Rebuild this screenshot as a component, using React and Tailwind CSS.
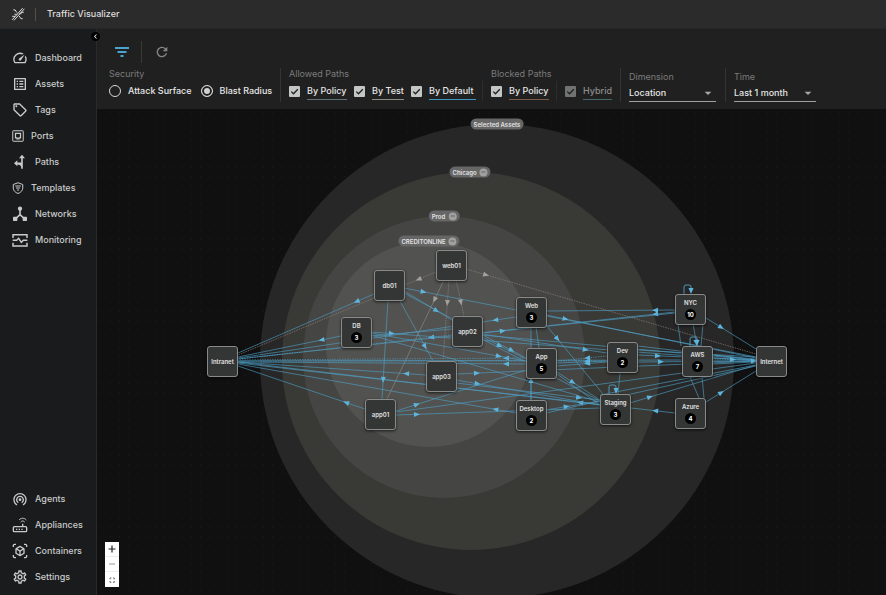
import React from 'react';
import {
  MdOutlineSpeed, MdOutlineListAlt, MdOutlineSell, MdWifiTethering, MdOutlineViewInAr,
  MdOutlineSettings, MdRefresh, MdArrowDropDown, MdChevronLeft,
} from 'react-icons/md';

const stroke = { viewBox: '0 0 24 24', fill: 'none', stroke: 'currentColor', strokeWidth: 2 };

const PortsIcon = () => (
  <svg {...stroke} className="size-3"><rect x="1.5" y="1.5" width="21" height="21" rx="1" /><path d="M7 6.500h10v9h-3v2h-4v-2h-3z" strokeWidth="2.500" /></svg>
);
const PathsIcon = () => (
  <svg {...stroke} className="size-4"><path d="M15 22V5M15 14H6M7 14.500c5 0 8 2 8 6" strokeWidth="2.400" /><path d="M15 1l4.500 5.500h-9zM3 14l5-4.500v9z" fill="currentColor" stroke="none" /></svg>
);
const TemplatesIcon = () => (
  <svg {...stroke} className="size-3"><path d="M12 1.500l9.500 3.500v7c0 5-4 9-9.500 11-5.500-2-9.500-6-9.500-11V5z" /><path d="M6.500 8h11M8 12h8M10 16h4" strokeWidth="2.200" /></svg>
);
const NetworksIcon = () => (
  <svg {...stroke} className="size-4"><path d="M12 4v9M12 13l-7 6.500M12 13l7 6.500" strokeWidth="2.400" /><g fill="currentColor" stroke="none"><circle cx="12" cy="4" r="3.200" /><rect x="1.500" y="16" width="6.500" height="6.500" rx="1" /><rect x="16" y="16" width="6.500" height="6.500" rx="1" /></g></svg>
);
const MonitoringIcon = () => (
  <svg {...stroke} className="size-4"><path d="M1.500 9V4h21v5M1.500 16v5h21v-5M1 12.500h6l3-3 4 6 3-3h6" strokeWidth="2.200" /></svg>
);
const AppliancesIcon = () => (
  <svg {...stroke} className="size-4"><rect x="2" y="14.500" width="20" height="7.500" rx="1.500" /><path d="M16 15v-5M6 18.500h2M10 18.500h2M14 18.500h2" /><path d="M10.500 4.500c3-3.500 8-3.500 11 0M13 7.500c2-2 4-2 6 0" strokeWidth="1.500" /></svg>
);
const BrandIcon = () => (
  <svg viewBox="0 0 24 24" fill="none" stroke="currentColor" strokeWidth="1.700" className="size-3.5"><path d="M2 22L20 2M5 23L23 3M4 5l3 0 3 4.500M20 20h-3l-3-4.500M2 16h5M17 9h5M6 12.500h4M14 11.500h4" /></svg>
);
const FilterIcon = () => (
  <svg viewBox="0 0 14 10" className="h-2.5 w-3.5" fill="none" stroke="currentColor" strokeWidth="1.800"><path d="M0 1h14M2.500 5h9M5.500 9h3" /></svg>
);

const mainLinks = [
  ['Dashboard', <MdOutlineSpeed className="size-4" />],
  ['Assets', <MdOutlineListAlt className="size-4" />],
  ['Tags', <MdOutlineSell className="size-4" />],
  ['Ports', <PortsIcon />],
  ['Paths', <PathsIcon />],
  ['Templates', <TemplatesIcon />],
  ['Networks', <NetworksIcon />],
  ['Monitoring', <MonitoringIcon />],
];
const systemLinks = [
  ['Agents', <MdWifiTethering className="size-4" />],
  ['Appliances', <AppliancesIcon />],
  ['Containers', <MdOutlineViewInAr className="size-4" />],
  ['Settings', <MdOutlineSettings className="size-4" />],
];

function NavList({ links }) {
  return (
    <ul>
      {links.map(([label, icon]) => (
        <li key={label}>
          <a href="#" className="flex h-[26px] items-center gap-[7px] pl-3 text-[9px] font-medium text-[#c9cbcb]">
            {icon}
            {label}
          </a>
        </li>
      ))}
    </ul>
  );
}

function Check({ label, width, line, dim }) {
  return (
    <label className={`flex items-center gap-[7px] ${dim ? 'text-[#8b8d8e]' : 'text-[#e6e6e6]'}`}>
      <span className="grid">
        <input type="checkbox" defaultChecked disabled={dim} className={`col-start-1 row-start-1 size-[11px] appearance-none rounded-[1px] ${dim ? 'bg-[#717373]' : 'bg-[#c4c6c6]'}`} />
        <svg viewBox="0 0 11 11" className="pointer-events-none col-start-1 row-start-1 size-[11px]" fill="none" stroke="#202020" strokeWidth="1.300"><path d="M2.300 5.600l2.200 2.200 4.300-4.600" /></svg>
      </span>
      <span className={`h-[18px] border-b pt-[3px] leading-[12px] whitespace-nowrap ${width} ${line}`}>{label}</span>
    </label>
  );
}

function Radio({ label, checked }) {
  return (
    <label className="flex items-center gap-[7px] text-[#e6e6e6]">
      <input type="radio" name="security" defaultChecked={checked} className="size-3 appearance-none rounded-full border border-[#d8d8d8] checked:bg-[#d0d0d0] checked:shadow-[inset_0_0_0_2px_#202020]" />
      <span className="whitespace-nowrap">{label}</span>
    </label>
  );
}

function Dropdown({ id, label, value, width }) {
  return (
    <div className={`flex flex-col ${width}`}>
      <label htmlFor={id} className="leading-3 font-normal text-[#7b7b7b]">{label}</label>
      <div className="mt-0.5 grid h-[18px] items-center border-b border-[#a0a0a0]">
        <select id={id} className="col-start-1 row-start-1 w-full appearance-none bg-transparent font-medium text-[#e6e6e6]">
          <option>{value}</option>
        </select>
        <MdArrowDropDown className="pointer-events-none col-start-1 row-start-1 size-4 justify-self-end text-[#a8a8a8]" />
      </div>
    </div>
  );
}

const ORIGIN_X = 97;
const ORIGIN_Y = 109;
const NODE_HALF = 15;

const rings = [
  [497, 361, 237, '#272727'],
  [471, 361, 189, '#393935'],
  [444, 357, 141, '#454543'],
  [429, 344, 103, '#525250'],
];

const ringLabels = [
  ['Selected Assets', 497, 124, false],
  ['Chicago', 470, 172, true],
  ['Prod', 444, 216, true],
  ['CREDITONLINE', 429, 241, true],
];

const nodes = [
  ['Intranet', 222, 361], ['db01', 389, 285], ['DB', 356, 332, 3], ['app01', 380, 414],
  ['web01', 451, 265], ['app02', 467, 331], ['app03', 441, 376], ['Web', 531, 312, 3],
  ['App', 541, 363, 5], ['Desktop', 531, 415, 2], ['Dev', 622, 357, 2], ['Staging', 615, 409, 3],
  ['NYC', 690, 309, 10], ['AWS', 697, 361, 7], ['Azure', 690, 413, 4], ['Internet', 771, 361],
];

const B = '#4f9fc4';
const G = '#8b8b8b';
const T = '#94827a';

// from x, from y, to x, to y, colour, arrow distance from the start, dashed
const edges = [
  [374, 294, 238, 353, B, 19],
  [436, 272, 238, 355, T, 19, 1],
  [341, 336, 238, 357, B, 20],
  [516, 317, 238, 358, B, 21],
  [452, 335, 238, 359, B, 21, 1],
  [675, 312, 238, 359, B, 20],
  [675, 310, 546, 311, B, 20],
  [526, 358, 238, 360, B, 20, 1],
  [607, 361, 238, 361, B, 20, 1],
  [526, 364, 238, 362, B, 20],
  [426, 375, 238, 362, B, 20],
  [516, 413, 238, 364, B, 21],
  [365, 409, 238, 366, B, 20],
  [600, 405, 238, 362, B, 20],
  [675, 413, 238, 363, B, 20],
  [682, 360, 238, 361, B, 0],
  [371, 332, 756, 361, B, 21],
  [371, 333, 526, 361, B, 130],
  [371, 335, 600, 402, B, 0],
  [371, 336, 452, 329, B, 0],
  [404, 288, 756, 357, B, 20],
  [404, 291, 452, 320, B, 38],
  [404, 293, 526, 358, B, 122],
  [388, 300, 382, 399, B, 80],
  [400, 301, 433, 361, B, 52],
  [444, 280, 387, 399, G, 22],
  [449, 280, 443, 361, G, 23, 1],
  [456, 280, 464, 316, G, 23, 1],
  [466, 269, 756, 354, T, 21, 1],
  [546, 315, 756, 358, B, 20],
  [546, 325, 603, 394, B, 18],
  [536, 327, 539, 348, B, 0],
  [531, 327, 531, 400, B, 0],
  [531, 400, 531, 377, B, 20],
  [482, 333, 675, 313, B, 21],
  [482, 335, 756, 360, B, 0],
  [482, 337, 526, 359, B, 20],
  [482, 339, 600, 401, B, 0],
  [482, 334, 607, 353, B, 105],
  [607, 356, 557, 361, B, 20, 1],
  [607, 361, 557, 363, B, 20],
  [607, 362, 557, 366, B, 20],
  [557, 372, 600, 400, B, 19],
  [557, 374, 600, 405, B, 0],
  [456, 374, 756, 361, B, 21],
  [456, 380, 600, 405, B, 22],
  [456, 383, 600, 400, B, 124],
  [396, 411, 526, 370, B, 22],
  [396, 412, 756, 363, B, 0],
  [396, 415, 600, 408, B, 21],
  [546, 410, 600, 401, B, 21],
  [546, 413, 756, 366, B, 0],
  [600, 395, 756, 365, B, 0],
  [630, 403, 756, 365, B, 21],
  [638, 350, 756, 357, B, 0],
  [638, 355, 756, 360, B, 20],
  [638, 362, 756, 361, B, 23],
  [638, 346, 756, 360, B, 0],
  [712, 359, 756, 360, B, 21, 1],
  [712, 361, 756, 361, B, 42],
  [712, 364, 756, 362, B, 0],
  [712, 355, 756, 359, B, 0],
  [706, 318, 756, 349, B, 18],
  [706, 402, 756, 371, B, 18],
  [678, 324, 681, 346, B, 0],
  [693, 324, 697, 346, B, 19],
  [703, 324, 701, 346, B, 0],
  [690, 377, 699, 398, B, 0],
  [702, 377, 704, 398, B, 0],
  [620, 373, 618, 394, B, 0],
];

const loops = [[684, 294], [690, 346], [609, 394]];

function Arrow({ x, y, angle, color }) {
  return <path d="M-3 -2.500L3 0L-3 2.500Z" fill={color} transform={`translate(${x} ${y}) rotate(${angle})`} />;
}

function Edge({ edge: [x1, y1, x2, y2, color, at, dashed] }) {
  const length = Math.hypot(x2 - x1, y2 - y1);
  const angle = (Math.atan2(y2 - y1, x2 - x1) * 180) / Math.PI;
  return (
    <g>
      <line x1={x1} y1={y1} x2={x2} y2={y2} stroke={color} strokeWidth="0.800" strokeOpacity="0.800" strokeDasharray={dashed ? '1.500 1' : undefined} />
      {at > 0 && <Arrow x={x1 + ((x2 - x1) * at) / length} y={y1 + ((y2 - y1) * at) / length} angle={angle} color={color === B ? '#5fb4db' : '#a3a19f'} />}
    </g>
  );
}

function Graph() {
  return (
    <div className="relative min-h-0 flex-1 overflow-hidden bg-[#101010] bg-[radial-gradient(#1c1c1c_0.700px,transparent_1px)] bg-[size:9px_9px]">
      <svg width="789" height="486" viewBox={`${ORIGIN_X} ${ORIGIN_Y} 789 486`} className="absolute top-0 left-0 overflow-visible" aria-hidden="true">
        {rings.map(([cx, cy, r, fill]) => <circle key={r} cx={cx} cy={cy} r={r} fill={fill} />)}
        {edges.map((edge, i) => <Edge key={i} edge={edge} />)}
        {loops.map(([x, y]) => (
          <g key={x}>
            <path d={`M${x} ${y}v-7q0 -2 2 -2h3q2 0 2 2v5`} fill="none" stroke={B} strokeWidth="0.900" />
            <Arrow x={x + 7} y={y - 3} angle={90} color="#5fb4db" />
          </g>
        ))}
      </svg>
      {ringLabels.map(([name, x, y, closable]) => (
        <div key={name} style={{ left: x - ORIGIN_X, top: y - ORIGIN_Y }} className="absolute flex h-[11px] -translate-x-1/2 -translate-y-1/2 items-center gap-[3px] rounded-full bg-[#666666] px-[3px] text-[6px] font-semibold whitespace-nowrap text-[#e2e2e2]">
          {name}
          {closable && (
            <button type="button" aria-label={`Collapse ${name}`} className="flex size-2 items-center justify-center rounded-full bg-[#a0a0a0]">
              <span className="h-px w-1 bg-[#666666]" />
            </button>
          )}
        </div>
      ))}
      {nodes.map(([name, x, y, count]) => (
        <div key={name} style={{ left: x - ORIGIN_X - NODE_HALF, top: y - ORIGIN_Y - NODE_HALF }} className="absolute flex size-[31px] flex-col items-center justify-center gap-0.5 rounded-[3px] border border-[#8a8a8a] bg-[#343636] text-[6px] leading-[8px] font-semibold text-[#e0e0e0] shadow-[0_1px_3px_#000a]">
          <span className="whitespace-nowrap">{name}</span>
          {count && <span className="flex size-[11px] items-center justify-center rounded-full bg-black font-bold text-white">{count}</span>}
        </div>
      ))}
      <div className="absolute bottom-2 left-2 flex w-[14px] flex-col bg-white text-[#222]">
        <button type="button" aria-label="Zoom in" className="flex h-[15px] items-center justify-center border-b border-[#eee]"><svg viewBox="0 0 8 8" className="size-2" stroke="currentColor" strokeWidth="1.200"><path d="M4 0.500v7M0.500 4h7" /></svg></button>
        <button type="button" aria-label="Zoom out" className="flex h-[15px] items-center justify-center border-b border-[#eee]"><svg viewBox="0 0 8 8" className="size-2" stroke="#999"><path d="M1 4h6" /></svg></button>
        <button type="button" aria-label="Fit view" className="flex h-[15px] items-center justify-center"><svg viewBox="0 0 8 8" className="size-2" fill="none" stroke="#666"><path d="M2 3.300V2h1.300M5 2h1.300v1.300M6.300 5v1.300H5M3.300 6.300H2V5" /></svg></button>
      </div>
    </div>
  );
}

export default function App() {
  return (
    <div className="flex h-screen flex-col bg-[#101010] font-['Inter','Noto_Sans',sans-serif]">
      <header className="flex h-[29px] shrink-0 items-center border-b border-[#262626] bg-[#2b2b2b] pl-[11px] text-[#dedede]">
        <BrandIcon />
        <span className="mr-[11px] ml-[10px] h-[13px] w-px bg-[#505050]" />
        <h1 className="text-[9px] font-medium">Traffic Visualizer</h1>
      </header>
      <div className="flex min-h-0 flex-1">
        <nav className="relative z-10 flex w-[97px] shrink-0 flex-col justify-between border-r border-[#292b2b] bg-[#191b1c] pt-4 pb-[5px]">
          <NavList links={mainLinks} />
          <NavList links={systemLinks} />
          <button type="button" aria-label="Collapse menu" className="absolute top-[3px] -right-[4px] flex size-[9px] items-center justify-center rounded-full bg-black text-white"><MdChevronLeft className="size-[9px]" /></button>
        </nav>
        <main className="flex min-w-0 flex-1 flex-col">
          <div className="h-20 shrink-0 bg-[#202020] pt-3 pl-3 text-[9px] font-medium">
            <div className="flex h-[22px] items-center">
              <button type="button" aria-label="Filters" className="ml-[6px] text-[#4aa3d0]"><FilterIcon /></button>
              <span className="mr-3 ml-3 h-[22px] w-px bg-[#393939]" />
              <button type="button" aria-label="Refresh" className="text-[#858585]"><MdRefresh className="size-4" /></button>
            </div>
            <div className="mt-[5px] flex h-[34px]">
              <div className="flex w-[171px] shrink-0 flex-col">
                <span className="leading-3 font-normal text-[#7b7b7b]">Security</span>
                <div className="mt-px flex h-5 items-center gap-[9px]">
                  <Radio label="Attack Surface" />
                  <Radio label="Blast Radius" checked />
                </div>
              </div>
              <div className="flex h-[34px] w-[202px] shrink-0 flex-col border-l border-[#343434] pl-2">
                <span className="leading-3 font-normal text-[#7b7b7b]">Allowed Paths</span>
                <div className="mt-px flex h-5 items-center gap-[7px]">
                  <Check label="By Policy" width="w-10" line="border-[#5f7476]" />
                  <Check label="By Test" width="w-8" line="border-[#8d8d86]" />
                  <Check label="By Default" width="w-[47px]" line="border-[#3f94c0]" />
                </div>
              </div>
              <div className="flex w-[74px] shrink-0 flex-col">
                <span className="pl-[9px] leading-3 font-normal whitespace-nowrap text-[#7b7b7b]">Blocked Paths</span>
                <div className="mt-px flex h-5 items-center border-l border-[#2d2d2d] pl-2">
                  <Check label="By Policy" width="w-10" line="border-[#7a5a48]" />
                </div>
              </div>
              <div className="mt-[13px] flex h-5 w-[64px] shrink-0 items-center border-l border-[#2d2d2d] pl-2">
                <Check label="Hybrid" width="w-[29px]" line="border-[#46666c]" dim />
              </div>
              <div className="flex h-[34px] w-[105px] shrink-0 border-l border-[#343434] pt-[3px] pl-2">
                <Dropdown id="dimension" label="Dimension" value="Location" width="w-[87px]" />
              </div>
              <div className="flex h-[34px] shrink-0 border-l border-[#343434] pt-[3px] pl-2">
                <Dropdown id="time" label="Time" value="Last 1 month" width="w-[82px]" />
              </div>
            </div>
          </div>
          <Graph />
        </main>
      </div>
    </div>
  );
}
